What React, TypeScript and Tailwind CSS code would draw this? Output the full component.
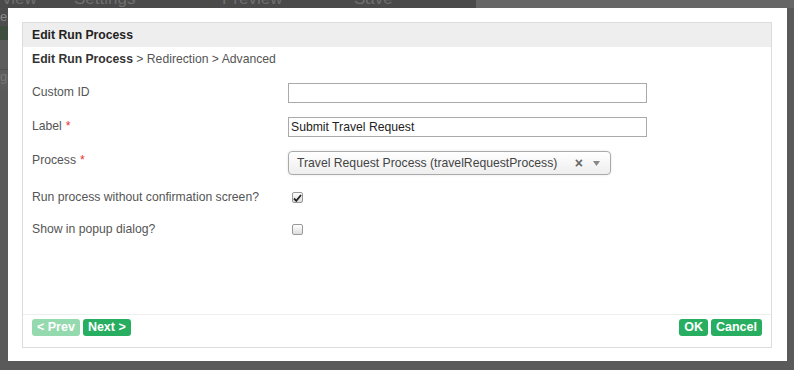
import React from "react";

export default function App() {
  const font = { fontFamily: '"Liberation Sans", Arial, sans-serif' };
  return (
    <div className="relative w-[794px] h-[370px] bg-[#5a5a5a] overflow-hidden" style={font}>
      {/* background page */}
      <div className="flex h-[22px] -mt-[14px]">
        <div className="w-[476px] bg-[#4a4a4a] relative text-[17px] text-[#6f6f6f] leading-none">
          <span className="absolute left-[-3px] bottom-[1px]">rview</span>
          <span className="absolute left-[74px] bottom-[1px]">Settings</span>
          <span className="absolute left-[222px] bottom-[1px]">Preview</span>
          <span className="absolute left-[354px] bottom-[1px]">Save</span>
        </div>
        <div className="flex-1 bg-[#666]" />
      </div>
      <div className="w-[8px] flex flex-col text-[#888] text-[13px] leading-none">
        <div className="h-[18px] bg-[#4d4d4d] pt-[2px]">e</div>
        <div className="h-[14px] bg-[#3f4d3f]" />
        <div className="h-[30px] bg-[#5c5c5c] border-b border-[#505050]" />
        <div className="h-[20px] bg-[#5c5c5c] text-[#777]">ge</div>
      </div>

      {/* modal */}
      <div className="absolute left-[8px] top-[8px] w-[779px] h-[353px] bg-white pl-[14px] pt-[14px] pr-[15px] pb-[13px]">
        <div className="h-full border border-[#dcdcdc] flex flex-col">
          <div className="h-[24px] bg-[#eeeeee] flex items-center pl-[9px] pt-[1px] text-[12.2px] font-bold text-[#222]">
            Edit Run Process
          </div>
          <div className="flex-1 px-[9px]">
            <div className="text-[12.2px] mt-[4px] leading-[16px] text-[#555]">
              <span className="font-bold text-[#333]">Edit Run Process</span> &gt; Redirection &gt; Advanced
            </div>
            <div className="mt-[16px] text-[12.2px] text-[#555]">
              <Row label="Custom ID" h={34}>
                <input className="w-[359px] h-[20px] border border-[#aaa] outline-none" readOnly />
              </Row>
              <Row label="Label" required h={34}>
                <input
                  className="w-[359px] h-[20px] border border-[#aaa] outline-none px-[2px] text-[12.2px] text-[#222]"
                  defaultValue="Submit Travel Request"
                  readOnly
                  style={font}
                />
              </Row>
              <Row label="Process" required h={37}>
                <div className="w-[323px] h-[24px] border border-[#aaa] rounded-[4px] bg-gradient-to-b from-white to-[#eee] flex items-center pl-[8px] pr-[10px] text-[#444] shadow-[0_0_3px_rgba(0,0,0,0.1)]">
                  <span className="flex-1">Travel Request Process (travelRequestProcess)</span>
                  <span className="text-[#666] text-[14px] font-bold mr-[10px]">×</span>
                  <svg width="7" height="5" viewBox="0 0 7 5"><path d="M0 0h7L3.5 5z" fill="#888" /></svg>
                </div>
              </Row>
              <Row label="Run process without confirmation screen?" h={32}>
                <Check checked />
              </Row>
              <Row label="Show in popup dialog?" h={32}>
                <Check />
              </Row>
            </div>
          </div>
          <div className="h-[33px] border-t border-[#eee] flex items-start pt-[4px] px-[9px] gap-[3px]">
            <Btn light>&lt; Prev</Btn>
            <Btn>Next &gt;</Btn>
            <div className="flex-1" />
            <Btn>OK</Btn>
            <Btn>Cancel</Btn>
          </div>
        </div>
      </div>
    </div>
  );
}

function Row({ label, required, h, children }: { label: string; required?: boolean; h: number; children: React.ReactNode }) {
  return (
    <div className="flex items-start" style={{ height: h }}>
      <div className="w-[256px] leading-[16px] pt-[1px]">
        {label}
        {required && <span className="text-[#e33] ml-[4px]">*</span>}
      </div>
      <div>{children}</div>
    </div>
  );
}

function Check({ checked }: { checked?: boolean }) {
  return (
    <div className="ml-[4px] mt-[4px] w-[11px] h-[11px] border border-[#999] rounded-[2px] bg-gradient-to-b from-white to-[#ddd] flex items-center justify-center">
      {checked && (
        <svg width="9" height="8" viewBox="0 0 9 8">
          <path d="M1 4.5L3.3 6.8L8 1" stroke="#222" strokeWidth="1.8" fill="none" />
        </svg>
      )}
    </div>
  );
}

function Btn({ children, light }: { children: React.ReactNode; light?: boolean }) {
  return (
    <div
      className={
        "h-[17px] px-[5px] rounded-[3px] text-white text-[12.5px] leading-[17px] font-bold " +
        (light ? "bg-[#95d9ae]" : "bg-[#27ae60]")
      }
    >
      {children}
    </div>
  );
}
